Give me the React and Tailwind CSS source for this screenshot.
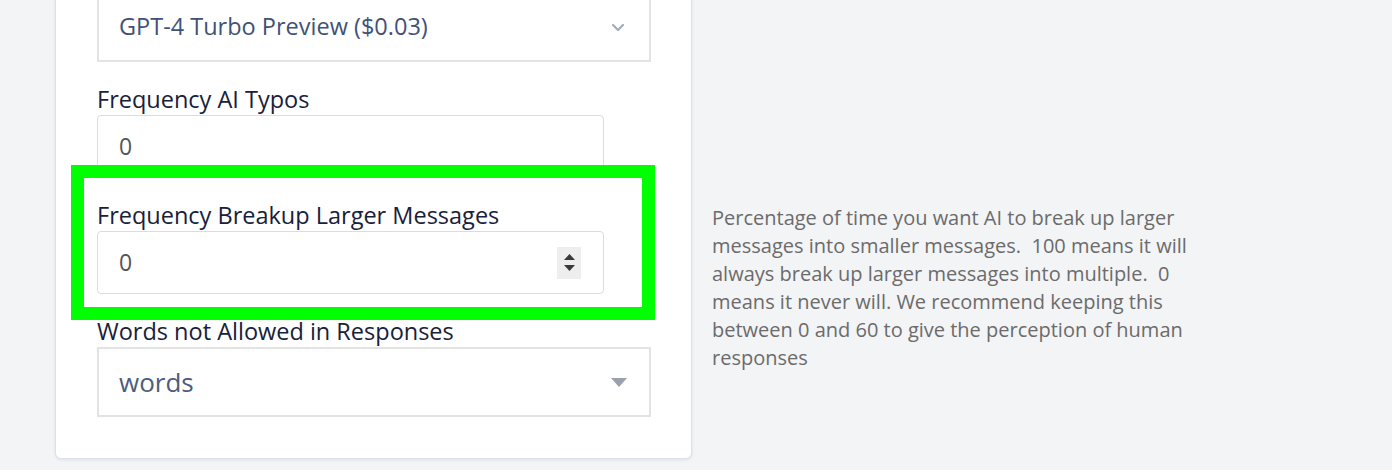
const Chevron = () => (
  <svg width="14" height="9" viewBox="0 0 14 9" className="text-[#a3acbd]">
    <path d="M2 2l5 5 5-5" fill="none" stroke="currentColor" strokeWidth="2.2" strokeLinecap="round" strokeLinejoin="round" />
  </svg>
);

const Spinner = () => (
  <div className="flex h-[32px] w-[24px] flex-col items-center justify-center gap-[5px] bg-[#eeeeee]">
    <svg width="11" height="6" viewBox="0 0 11 6">
      <path d="M5.5 0L11 6H0z" fill="#3a3a3a" />
    </svg>
    <svg width="11" height="6" viewBox="0 0 11 6">
      <path d="M0 0h11L5.5 6z" fill="#3a3a3a" />
    </svg>
  </div>
);

const Label = ({ children }) => (
  <label className="block h-[31px] whitespace-nowrap text-[23.5px] leading-[31px] text-[#18213a]">{children}</label>
);

const NumberInput = ({ spinner }) => (
  <div className="flex h-[63px] w-[507px] items-center justify-between rounded-[4px] border border-[#dcdcdc] bg-white pl-[21px] pr-[22px]">
    <span className="text-[23px] text-[#555555]">0</span>
    {spinner && <Spinner />}
  </div>
);

export default function App() {
  return (
    <div className="min-h-[470px] overflow-hidden bg-[#f3f4f6] font-['Open_Sans',sans-serif]">
      <div className="flex items-start pl-[55px]">
        <div className="mt-[-50px] w-[637px] shrink-0 rounded-[6px] border border-[#dbe1ea] bg-white px-[41px] pb-[41px] pt-[41px] shadow-[0_1px_3px_rgba(100,116,139,0.15)]">
          <div className="flex h-[70px] w-[554px] items-center justify-between border-2 border-[#e3e3e3] pl-[20px] pr-[24px]">
            <span className="text-[23.5px] text-[#3f5277]">GPT-4 Turbo Preview ($0.03)</span>
            <Chevron />
          </div>

          <div className="mt-[22px]">
            <Label>Frequency AI Typos</Label>
            <NumberInput />
          </div>

          <div className="relative mt-[22px]">
            <Label>Frequency Breakup Larger Messages</Label>
            <NumberInput spinner />
            <div className="pointer-events-none absolute -bottom-[26px] -left-[26px] -right-[5px] -top-[35px] border-[13px] border-[#00ff00]" />
          </div>

          <div className="mt-[22px]">
            <Label>Words not Allowed in Responses</Label>
            <div className="flex h-[70px] w-[554px] items-center justify-between border-2 border-[#e3e3e3] pl-[20px] pr-[22px]">
              <span className="text-[26px] text-[#4b5d7e]">words</span>
              <svg width="16" height="9" viewBox="0 0 16 9">
                <path d="M0 0h16L8 9z" fill="#9aa1ad" />
              </svg>
            </div>
          </div>
        </div>

        <p className="ml-[20px] mt-[204px] w-[492px] whitespace-pre-wrap text-[20px] leading-[28px] text-[#6b6b6b]">
          {"Percentage of time you want AI to break up larger messages into smaller messages.  100 means it will always break up larger messages into multiple.  0 means it never will. We recommend keeping this between 0 and 60 to give the perception of human responses"}
        </p>
      </div>
    </div>
  );
}
